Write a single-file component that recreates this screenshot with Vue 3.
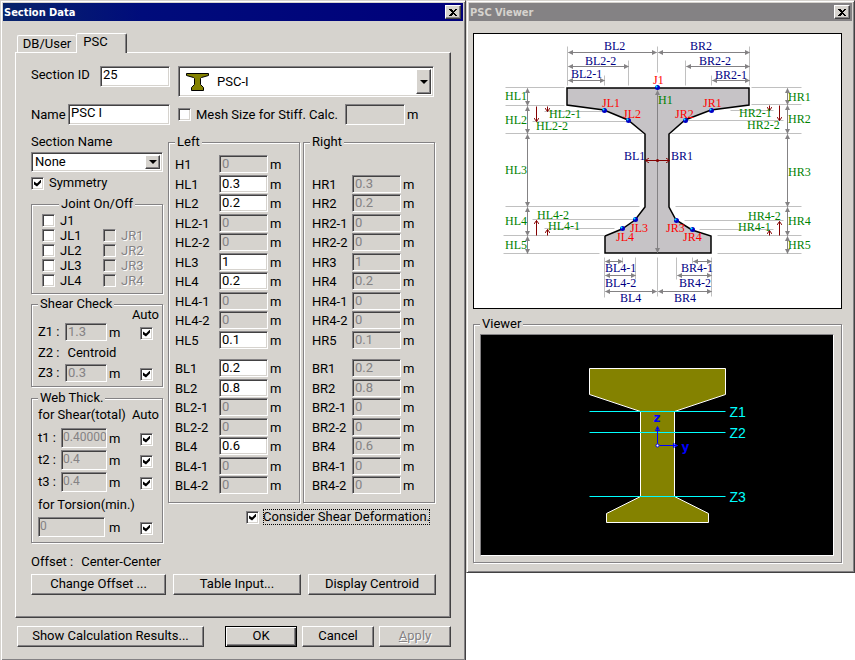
<script setup>
import { ref, reactive } from 'vue'

const sectionId = ref('25')
const name = ref('PSC I')
const shape = ref('PSC-I')
const sectionName = ref('None')
const meshSize = ref(false)
const symmetry = ref(true)
const shearDeformation = ref(true)

const joints = reactive([
  { left: 'J1', on: false },
  { left: 'JL1', right: 'JR1', on: false },
  { left: 'JL2', right: 'JR2', on: false },
  { left: 'JL3', right: 'JR3', on: false },
  { left: 'JL4', right: 'JR4', on: false },
])

const webThick = reactive([
  { id: 't1', value: '0.40000', auto: true },
  { id: 't2', value: '0.4', auto: true },
  { id: 't3', value: '0.4', auto: true },
])

const z1Auto = ref(true)
const z3Auto = ref(true)
const torsionAuto = ref(true)

const heights = reactive([
  { key: '1', value: '0.3', on: true },
  { key: '2', value: '0.2', on: true },
  { key: '2-1', value: '0' },
  { key: '2-2', value: '0' },
  { key: '3', value: '1', on: true },
  { key: '4', value: '0.2', on: true },
  { key: '4-1', value: '0' },
  { key: '4-2', value: '0' },
  { key: '5', value: '0.1', on: true },
])

const widths = reactive([
  { key: '1', value: '0.2', on: true },
  { key: '2', value: '0.8', on: true },
  { key: '2-1', value: '0' },
  { key: '2-2', value: '0' },
  { key: '4', value: '0.6', on: true },
  { key: '4-1', value: '0' },
  { key: '4-2', value: '0' },
])

const sides = [
  { id: 'left', title: 'Left', letter: 'L' },
  { id: 'right', title: 'Right', letter: 'R' },
]

// guide diagram: [x1, y1, x2, y2]
const guides = [
  [505, 87, 564, 87], [505, 105, 564, 105], [505, 133, 642, 133],
  [544, 111, 603, 111], [532, 121, 628, 121],
  [505, 206, 639, 206], [503, 235, 604, 235], [503, 253, 599, 253],
  [532, 219, 636, 219], [544, 228, 614, 228],
  [751, 87, 801, 87], [751, 104, 801, 104], [671, 133, 801, 133],
  [730, 110, 773, 110], [685, 120, 783, 120],
  [675, 206, 801, 206], [717, 235, 801, 235], [717, 253, 801, 253],
  [684, 220, 783, 220], [699, 229, 773, 229],
  [567, 46, 567, 85], [657, 46, 657, 72], [749, 46, 749, 85],
  [628, 60, 628, 85], [604, 75, 604, 85], [685, 60, 685, 85], [711, 75, 711, 85],
  [604, 257, 604, 297], [622, 257, 622, 263], [635, 257, 635, 279], [657, 257, 657, 296],
  [711, 257, 711, 296], [692, 257, 692, 263], [676, 257, 676, 279],
]

const dims = [
  [568, 52, 656, 52], [658, 52, 749, 52], [568, 66, 628, 66], [686, 66, 749, 66],
  [568, 80, 604, 80], [712, 80, 749, 80],
  [605, 261, 622, 261], [693, 261, 711, 261], [605, 275, 635, 275], [677, 275, 711, 275],
  [605, 291, 656, 291], [658, 291, 711, 291],
  [527, 88, 527, 105], [527, 106, 527, 133], [527, 134, 527, 206], [527, 207, 527, 235], [527, 236, 527, 253],
  [787, 88, 787, 104], [787, 105, 787, 133], [787, 134, 787, 206], [787, 207, 787, 235], [787, 236, 787, 253],
  [657, 90, 657, 252],
]

const offsets = [
  [536, 106, 536, 121], [547, 106, 547, 111], [769, 105, 769, 110], [779, 105, 779, 120],
  [536, 235, 536, 220], [547, 235, 547, 229], [769, 235, 769, 230], [779, 235, 779, 221],
]

const points = [
  [657, 87], [604, 110], [628, 120], [711, 110], [685, 120],
  [635, 219], [622, 228], [676, 220], [692, 229],
]

const labels = [
  ['BL2', 604, 50, 'b'], ['BR2', 690, 50, 'b'], ['BL2-2', 585, 65, 'b'], ['BR2-2', 699, 65, 'b'],
  ['BL2-1', 571, 78, 'b'], ['BR2-1', 715, 79, 'b'], ['BL1', 624, 160, 'b'], ['BR1', 671, 160, 'b'],
  ['BL4-1', 605, 272, 'b'], ['BL4-2', 605, 287, 'b'], ['BL4', 620, 302, 'b'],
  ['BR4-1', 681, 272, 'b'], ['BR4-2', 679, 287, 'b'], ['BR4', 674, 302, 'b'],
  ['HL1', 505, 100, 'h'], ['HL2', 505, 124, 'h'], ['HL3', 505, 174, 'h'], ['HL4', 505, 225, 'h'], ['HL5', 505, 249, 'h'],
  ['HR1', 788, 101, 'h'], ['HR2', 788, 123, 'h'], ['HR3', 788, 176, 'h'], ['HR4', 788, 225, 'h'], ['HR5', 788, 249, 'h'],
  ['HL2-1', 549, 118, 'h'], ['HL2-2', 536, 130, 'h'], ['HR2-1', 739, 117, 'h'], ['HR2-2', 747, 129, 'h'],
  ['HL4-2', 537, 219, 'h'], ['HL4-1', 548, 230, 'h'], ['HR4-2', 748, 220, 'h'], ['HR4-1', 738, 231, 'h'],
  ['H1', 658, 104, 'h'],
  ['J1', 653, 84, 'j'], ['JL1', 602, 107, 'j'], ['JL2', 623, 118, 'j'], ['JR1', 703, 107, 'j'], ['JR2', 675, 118, 'j'],
  ['JL3', 630, 232, 'j'], ['JL4', 616, 241, 'j'], ['JR3', 666, 232, 'j'], ['JR4', 683, 241, 'j'],
]

const zLines = [
  { id: 'Z1', y: 411 },
  { id: 'Z2', y: 432 },
  { id: 'Z3', y: 496 },
]
</script>

<template>
  <div class="desktop">
    <section class="window">
      <header class="title-bar">
        <span>Section Data</span>
        <button class="close" aria-label="Close">
          <svg width="8" height="7" viewBox="0 0 8 7" shape-rendering="crispEdges">
            <path d="M0 0h2l2 2 2-2h2L5 3.5 8 7H6L4 5 2 7H0l3-3.5z" />
          </svg>
        </button>
      </header>

      <div class="dialog">
        <nav class="tabs">
          <button class="tab">DB/User</button>
          <button class="tab active">PSC</button>
        </nav>

        <div class="panel">
          <div class="top-grid">
            <div class="line">
              <label for="section-id" class="id-label">Section ID</label>
              <input id="section-id" v-model="sectionId" class="box tall grow" />
            </div>
            <div class="combo shape-combo">
              <svg class="shape-icon" width="23" height="18" viewBox="0 0 23 18">
                <path
                  d="M.5 .5h22v2l-7 2-1 1v6l3 3v3h-12v-3l3-3v-6l-1-1-7-2z"
                  fill="#848200"
                  stroke="#000"
                />
              </svg>
              <select v-model="shape" aria-label="Section shape">
                <option>PSC-I</option>
              </select>
              <span class="drop"></span>
            </div>
            <div class="line">
              <label for="name" class="name-label">Name</label>
              <input id="name" v-model="name" class="box tall grow" />
            </div>
            <div class="line">
              <input id="mesh" v-model="meshSize" type="checkbox" class="check" />
              <label for="mesh" class="mesh-label">Mesh Size for Stiff. Calc.</label>
              <input class="box tall mesh-input" aria-label="Mesh size" :disabled="!meshSize" />
              <span class="unit">m</span>
            </div>
          </div>

          <div class="main-grid">
            <div class="side">
              <label for="section-name" class="text">Section Name</label>
              <div class="combo name-combo">
                <select id="section-name" v-model="sectionName">
                  <option>None</option>
                </select>
                <span class="drop"></span>
              </div>
              <label class="line symmetry">
                <input v-model="symmetry" type="checkbox" class="check" />
                Symmetry
              </label>

              <fieldset class="group joints">
                <legend>Joint On/Off</legend>
                <div v-for="j in joints" :key="j.left" class="joint-row">
                  <label class="line">
                    <input v-model="j.on" type="checkbox" class="check" />
                    {{ j.left }}
                  </label>
                  <label v-if="j.right" class="line off">
                    <input type="checkbox" class="check" disabled />
                    {{ j.right }}
                  </label>
                </div>
              </fieldset>

              <fieldset class="group shear">
                <legend>Shear Check</legend>
                <div class="auto-head">Auto</div>
                <div class="auto-row">
                  <label for="z1">Z1 :</label>
                  <input id="z1" class="box" value="1.3" disabled />
                  <span class="unit">m</span>
                  <input v-model="z1Auto" type="checkbox" class="check" aria-label="Z1 auto" />
                </div>
                <div class="centroid"><span>Z2 :</span><span>Centroid</span></div>
                <div class="auto-row">
                  <label for="z3">Z3 :</label>
                  <input id="z3" class="box" value="0.3" disabled />
                  <span class="unit">m</span>
                  <input v-model="z3Auto" type="checkbox" class="check" aria-label="Z3 auto" />
                </div>
              </fieldset>

              <fieldset class="group web">
                <legend>Web Thick.</legend>
                <div class="web-head"><span>for Shear(total)</span><span>Auto</span></div>
                <div v-for="t in webThick" :key="t.id" class="auto-row">
                  <label :for="t.id">{{ t.id }} :</label>
                  <input :id="t.id" class="box mid" :value="t.value" disabled />
                  <span class="unit">m</span>
                  <input v-model="t.auto" type="checkbox" class="check" :aria-label="t.id + ' auto'" />
                </div>
                <label for="torsion" class="text torsion-label">for Torsion(min.)</label>
                <div class="auto-row wide">
                  <input id="torsion" class="box mid" value="0" disabled />
                  <span class="unit">m</span>
                  <input v-model="torsionAuto" type="checkbox" class="check" aria-label="Torsion auto" />
                </div>
              </fieldset>
            </div>

            <div class="sizes">
              <div class="size-groups">
                <fieldset v-for="s in sides" :key="s.id" class="group size-group" :class="s.id">
                  <legend>{{ s.title }}</legend>
                  <div class="size-rows">
                    <div class="size-row">
                      <template v-if="s.id === 'left'">
                        <label for="h1">H1</label>
                        <input id="h1" class="box" value="0" disabled />
                        <span>m</span>
                      </template>
                    </div>
                    <div v-for="r in heights" :key="r.key" class="size-row">
                      <label :for="'h' + s.letter + r.key">H{{ s.letter }}{{ r.key }}</label>
                      <input
                        :id="'h' + s.letter + r.key"
                        v-model="r.value"
                        class="box"
                        :disabled="!r.on || s.id === 'right'"
                      />
                      <span>m</span>
                    </div>
                  </div>
                  <div class="size-rows">
                    <div v-for="r in widths" :key="r.key" class="size-row">
                      <label :for="'b' + s.letter + r.key">B{{ s.letter }}{{ r.key }}</label>
                      <input
                        :id="'b' + s.letter + r.key"
                        v-model="r.value"
                        class="box"
                        :disabled="!r.on || s.id === 'right'"
                      />
                      <span>m</span>
                    </div>
                  </div>
                </fieldset>
              </div>
              <div class="line consider">
                <input id="shear-def" v-model="shearDeformation" type="checkbox" class="check" />
                <label for="shear-def" class="focused">Consider Shear Deformation.</label>
              </div>
            </div>
          </div>

          <div class="offset"><span>Offset :</span><span>Center-Center</span></div>
          <div class="actions">
            <button class="btn">Change Offset ...</button>
            <button class="btn">Table Input...</button>
            <button class="btn">Display Centroid</button>
          </div>
        </div>

        <footer class="footer">
          <button class="btn results">Show Calculation Results...</button>
          <button class="btn default">OK</button>
          <button class="btn">Cancel</button>
          <button class="btn" disabled><u>A</u>pply</button>
        </footer>
      </div>
    </section>

    <section class="window">
      <header class="title-bar inactive">
        <span>PSC Viewer</span>
        <button class="close" aria-label="Close">
          <svg width="8" height="7" viewBox="0 0 8 7" shape-rendering="crispEdges">
            <path d="M0 0h2l2 2 2-2h2L5 3.5 8 7H6L4 5 2 7H0l3-3.5z" />
          </svg>
        </button>
      </header>

      <div class="viewer">
        <svg class="guide" viewBox="474 34 367 274">
          <defs>
            <marker id="dim" viewBox="0 0 5 5" refX="4.5" refY="2.5" markerWidth="5" markerHeight="5" markerUnits="userSpaceOnUse" orient="auto-start-reverse">
              <path d="M0 0l5 2.5-5 2.5z" fill="#848284" />
            </marker>
            <marker id="off" viewBox="0 0 5 5" refX="4.5" refY="2.5" markerWidth="5" markerHeight="5" markerUnits="userSpaceOnUse" orient="auto-start-reverse">
              <path d="M1 0l3.5 2.5L1 5" fill="none" stroke="#840000" />
            </marker>
          </defs>
          <path
            d="M567 88H749V105L711 110L685 120L669 134V207L676 220L692 230L711 236V253H605V236L622 229L635 220L645 207V134L628 120L604 110L567 105Z"
            fill="#c6c3c6"
            stroke="#000"
            stroke-width="1.5"
          />
          <g transform="translate(.5 .5)">
            <line v-for="(g, i) in guides" :key="i" :x1="g[0]" :y1="g[1]" :x2="g[2]" :y2="g[3]" stroke="#c0c0c0" />
            <line
              v-for="(d, i) in dims"
              :key="i"
              :x1="d[0]"
              :y1="d[1]"
              :x2="d[2]"
              :y2="d[3]"
              stroke="#848284"
              marker-start="url(#dim)"
              marker-end="url(#dim)"
            />
            <line
              v-for="(o, i) in offsets"
              :key="i"
              :x1="o[0]"
              :y1="o[1]"
              :x2="o[2]"
              :y2="o[3]"
              stroke="#840000"
              marker-end="url(#off)"
            />
            <line x1="645" y1="160" x2="669" y2="160" stroke="#840000" marker-start="url(#off)" marker-end="url(#off)" />
            <circle cx="657" cy="160" r="1.5" fill="#840000" />
            <g v-for="(p, i) in points" :key="i">
              <circle :cx="p[0]" :cy="p[1]" r="2.5" fill="#0000c6" />
              <circle :cx="p[0] - 1" :cy="p[1] - 1" r="1" fill="#00ffff" />
            </g>
          </g>
          <text v-for="l in labels" :key="l[0]" :x="l[1]" :y="l[2]" :class="l[3]">{{ l[0] }}</text>
        </svg>

        <fieldset class="group view-group">
          <legend>Viewer</legend>
          <svg class="view" viewBox="481 335 352 220">
            <g transform="translate(.5 .5)">
              <path
                d="M589 368H725V394L674 411V496L708 513V522H606V513L640 496V411L589 394Z"
                fill="#848200"
                stroke="#fff"
              />
              <g v-for="z in zLines" :key="z.id">
                <line x1="589" :y1="z.y" x2="725" :y2="z.y" stroke="#00ffff" />
                <text x="729" :y="z.y + 5" class="z">{{ z.id }}</text>
              </g>
              <g stroke="#0000ff" fill="none">
                <path d="M657 443V427M659 445H677M655 430L657 426L659 430ZM673 443L677 445L673 447Z" />
                <circle cx="657" cy="445" r="1.5" fill="#fff" />
              </g>
              <text x="653" y="421" class="axis">z</text>
              <text x="681" y="450" class="axis">y</text>
            </g>
          </svg>
        </fieldset>
      </div>
    </section>
  </div>
</template>

<style>
body {
  background: #fff;
}
</style>

<style scoped>
.desktop {
  display: grid;
  grid-template-columns: minmax(466px, 466fr) minmax(389px, 389fr);
  align-items: start;
  font-family: Roboto, "Liberation Sans", sans-serif;
  font-size: 13px;
  line-height: 16px;
  color: #000;
}

.desktop * {
  box-sizing: border-box;
}

.window {
  background: #d6d3ce;
  border: 1px solid;
  border-color: #d6d3ce #424142 #424142 #d6d3ce;
  box-shadow: inset 1px 1px 0 #fff, inset -1px -1px 0 #848284;
  padding: 2px;
}

.title-bar {
  display: flex;
  align-items: center;
  justify-content: space-between;
  height: 18px;
  padding: 0 2px 0 1px;
  background: linear-gradient(90deg, #08246b, #000c7b 30%, #00007b);
  color: #fff;
  font: bold 11px "DejaVu Sans Condensed", "DejaVu Sans", sans-serif;
}

.title-bar.inactive {
  background: #848284;
  color: #d6d3ce;
}

.close {
  display: flex;
  align-items: center;
  justify-content: center;
  width: 16px;
  height: 14px;
  padding: 0;
  background: #d6d3ce;
  border: 1px solid;
  border-color: #fff #424142 #424142 #fff;
  box-shadow: inset -1px -1px 0 #848284;
}

.dialog {
  padding: 12px 12px 11px;
}

.tabs {
  display: flex;
  align-items: flex-end;
  padding-left: 2px;
}

.tab {
  width: 59px;
  height: 17px;
  padding: 0;
  background: #d6d3ce;
  border: 1px solid #fff;
  border-width: 1px 0 0 1px;
  border-radius: 2px 2px 0 0;
  color: #000;
  font: inherit;
  line-height: 16px;
}

.tab.active {
  position: relative;
  width: 51px;
  height: 20px;
  margin-bottom: -1px;
  padding: 0 12px 4px 0;
  border-right: 1px solid #424142;
  box-shadow: inset -1px 0 0 #848284;
}

.panel {
  padding: 13px 14px 22px 15px;
  border: 1px solid;
  border-color: #fff #424142 #424142 #fff;
  box-shadow: inset -1px -1px 0 #848284;
}

.top-grid {
  display: grid;
  grid-template-columns: 139px 1fr;
  gap: 7px 8px;
}

.line {
  display: flex;
  align-items: center;
}

.top-grid .line {
  height: 21px;
}

.id-label {
  width: 69px;
  padding-bottom: 3px;
}

.name-label {
  width: 37px;
}

.grow {
  flex: 1;
  min-width: 0;
}

.mesh-label {
  flex: 1;
  margin-left: 5px;
}

.unit {
  padding-left: 2px;
}

.mesh-input + .unit {
  width: 31px;
}

.box {
  display: block;
  width: 100%;
  height: 18px;
  padding: 0 0 2px 2px;
  background: #fff;
  border: 1px solid;
  border-color: #848284 #fff #fff #848284;
  border-radius: 0;
  box-shadow: inset 1px 1px 0 #424142, inset -1px -1px 0 #d6d3ce;
  color: #000;
  font: inherit;
  line-height: 14px;
  outline: none;
}

.box:disabled {
  background: #d6d3ce;
  color: #848284;
}

.box.tall {
  height: 21px;
  padding-bottom: 4px;
}

.box.tall.grow {
  width: auto;
}

.box.tall.mesh-input {
  width: 60px;
}

.box.mid {
  height: 20px;
  padding: 0 0 3px 1px;
  font-size: 12px;
}

.check {
  appearance: none;
  flex: none;
  width: 13px;
  height: 13px;
  margin: 0;
  background: #fff;
  border: 1px solid;
  border-color: #848284 #fff #fff #848284;
  box-shadow: inset 1px 1px 0 #424142, inset -1px -1px 0 #d6d3ce;
}

.check:disabled {
  background: #d6d3ce;
}

.check:checked::after {
  content: "";
  display: block;
  width: 7px;
  height: 7px;
  margin: 2px;
  background: #000;
  clip-path: polygon(0 29%, 43% 57%, 100% 0, 100% 43%, 43% 100%, 0 71%);
}

.combo {
  position: relative;
  display: flex;
  align-items: center;
  background: #fff;
  border: 1px solid;
  border-color: #848284 #fff #fff #848284;
  box-shadow: inset 1px 1px 0 #424142, inset -1px -1px 0 #d6d3ce;
}

.combo select {
  appearance: none;
  flex: 1;
  align-self: stretch;
  padding: 0 0 0 3px;
  background: none;
  border: 0;
  color: #000;
  font: inherit;
  outline: none;
}

.drop {
  position: absolute;
  top: 2px;
  right: 2px;
  bottom: 2px;
  width: 15px;
  background: #d6d3ce;
  border: 1px solid;
  border-color: #fff #424142 #424142 #fff;
  box-shadow: inset -1px -1px 0 #848284;
  pointer-events: none;
}

.drop::after {
  content: "";
  position: absolute;
  top: calc(50% - 2px);
  left: 3px;
  border: 4px solid transparent;
  border-top-color: #000;
  border-bottom: 0;
}

.shape-combo {
  height: 31px;
  margin-right: 2px;
}

.shape-icon {
  margin-left: 7px;
}

.shape-combo select {
  padding-left: 8px;
}

.main-grid {
  display: grid;
  grid-template-columns: 132px 1fr;
  gap: 5px;
}

.side {
  padding-top: 9px;
}

.text {
  display: block;
}

.name-combo {
  height: 20px;
  margin: 2px 0 3px;
}

.symmetry {
  gap: 5px;
  margin-bottom: 6px;
}

.group {
  min-width: 0;
  margin: 0;
  padding: 0 3px 5px 6px;
  border: 1px solid #848284;
  box-shadow: 1px 1px 0 #fff, inset 1px 1px 0 #fff;
}

.group legend {
  padding: 0 2px;
  background: #d6d3ce;
  line-height: 14px;
}

.joints {
  margin-bottom: 3px;
  padding: 2px 10px 5px;
}

.joints legend {
  margin: 0 auto;
}

.joint-row {
  display: grid;
  grid-template-columns: 61px 1fr;
  height: 15px;
}

.joint-row .line {
  gap: 5px;
  line-height: 15px;
}

.off {
  color: #848284;
  text-shadow: 1px 1px 0 #fff;
}

.shear {
  margin-bottom: 4px;
  padding-bottom: 4px;
}

.auto-head {
  margin-bottom: 4px;
  line-height: 8px;
  text-align: right;
}

.auto-row {
  display: grid;
  grid-template-columns: 27px 1fr 33px 19px;
  align-items: center;
}

.auto-row .unit,
.auto-row .check {
  margin-top: 2px;
}

.centroid {
  display: flex;
  gap: 8px;
  margin: 3px 0;
  line-height: 17px;
}

.web {
  padding-top: 2px;
}

.web-head {
  display: flex;
  justify-content: space-between;
  margin-bottom: 5px;
}

.web .auto-row {
  grid-template-columns: 23px 1fr 33px 19px;
  margin-bottom: 2px;
}

.torsion-label {
  margin: 5px 0 4px;
}

.web .auto-row.wide {
  grid-template-columns: 1fr 35px 19px;
  margin: 0;
}

.wide .unit {
  padding-left: 4px;
}

.sizes {
  padding: 10px 1px 0 0;
}

.size-groups {
  display: grid;
  grid-template-columns: 1fr 1fr;
  gap: 3px;
}

.size-group {
  padding: 6px 0 6px 6px;
}

.size-group.right {
  padding-left: 8px;
}

.size-group.right legend {
  margin-left: -2px;
}

.size-rows + .size-rows {
  margin-top: 9px;
}

.size-row {
  display: grid;
  grid-template-columns: 44px 1fr 31px;
  align-items: start;
  height: 20px;
}

.right .size-row {
  grid-template-columns: 40px 1fr 33px;
}

.size-row:nth-child(even) {
  height: 19px;
}

.size-row label,
.size-row span {
  padding-top: 2px;
}

.size-row span {
  padding-left: 2px;
}

.consider {
  justify-content: flex-end;
  gap: 4px;
  margin-top: 6px;
  padding-right: 5px;
}

.focused {
  outline: 1px dotted #000;
  outline-offset: -1px;
}

.offset {
  display: flex;
  gap: 8px;
  margin: 11px 0 4px;
}

.actions {
  display: grid;
  grid-template-columns: 135fr 128fr 128fr;
  gap: 7px;
}

.btn {
  height: 21px;
  padding: 0 0 2px;
  background: #d6d3ce;
  border: 1px solid;
  border-color: #fff #424142 #424142 #fff;
  border-radius: 0;
  box-shadow: inset -1px -1px 0 #848284;
  color: #000;
  font: inherit;
}

.btn.default {
  border-color: #000;
  box-shadow: inset 1px 1px 0 #fff, inset -1px -1px 0 #424142, inset -2px -2px 0 #848284;
}

.btn:disabled {
  color: #848284;
  text-shadow: 1px 1px 0 #fff;
}

.footer {
  display: grid;
  grid-template-columns: 203fr 72fr 72fr 72fr;
  column-gap: 5px;
  padding: 8px 0 0 2px;
}

.results {
  margin-right: 16px;
}

.viewer {
  padding: 12px 10px 7px 4px;
}

.guide {
  display: block;
  width: 100%;
  background: #fff;
  border: 1px solid #000;
  font: 12px "Liberation Serif", serif;
}

.b {
  fill: #000084;
}

.h {
  fill: #008200;
}

.j {
  fill: #ff0000;
}

.view-group {
  margin-top: 8px;
  padding: 3px 7px 6px 6px;
}

.view {
  display: block;
  width: 100%;
  background: #000;
  border: 1px solid;
  border-color: #848284 #fff #fff #848284;
}

.z {
  fill: #00ffff;
  font: 14px "Liberation Sans", sans-serif;
}

.axis {
  fill: #0000ff;
  font: bold 12px "DejaVu Sans", sans-serif;
}
</style>
